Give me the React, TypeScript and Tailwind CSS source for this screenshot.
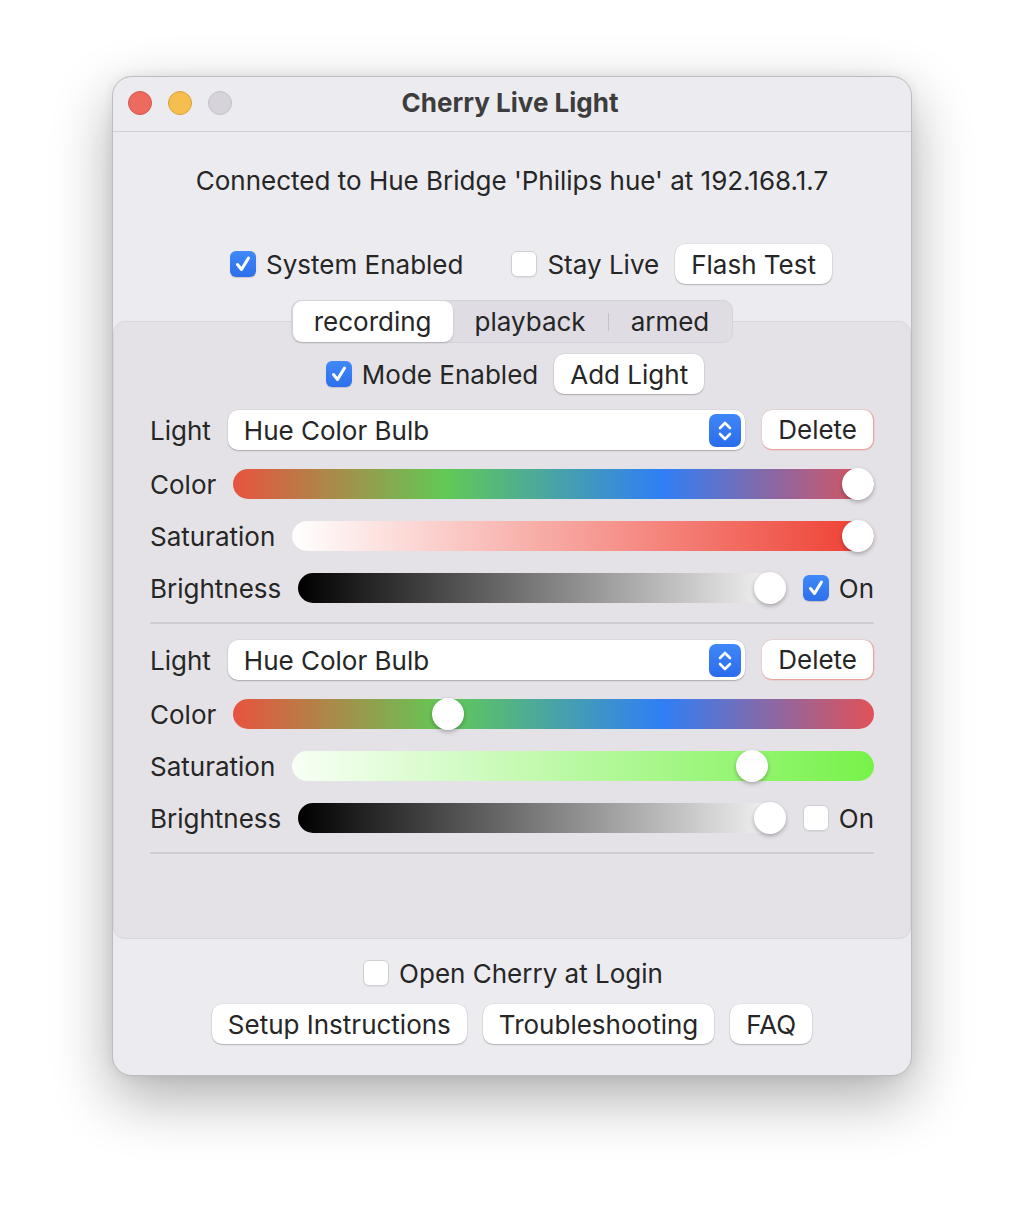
import React from "react";

const Check = ({ checked }: { checked: boolean }) =>
  checked ? (
    <div className="w-[26px] h-[26px] shrink-0 rounded-[6px] bg-[linear-gradient(to_bottom,#4089f9,#2d6fea)] flex items-center justify-center shadow-[0_1px_1px_rgba(0,0,0,0.15)]">
      <svg width="20" height="20" viewBox="0 0 20 20" fill="none">
        <path d="M4.5 10.5 L8.5 15.5 L15.5 4" stroke="white" strokeWidth="3" strokeLinecap="round" strokeLinejoin="round" />
      </svg>
    </div>
  ) : (
    <div className="w-[26px] h-[26px] shrink-0 rounded-[6px] bg-white border border-[#d0ced3] shadow-[0_1px_1px_rgba(0,0,0,0.06)]" />
  );

const Btn = ({ children, danger }: { children: React.ReactNode; danger?: boolean }) => (
  <div
    className={
      "h-[40px] px-[16px] flex items-center rounded-[10px] bg-white " +
      (danger
        ? "border-r border-b border-[#e9a59c] shadow-[0_0_0_0.5px_rgba(220,120,110,0.35)]"
        : "shadow-[0_1px_1.5px_rgba(0,0,0,0.22),0_0_0_0.5px_rgba(0,0,0,0.08)]")
    }
  >
    {children}
  </div>
);

const Slider = ({ value, bg }: { value: number; bg: string }) => (
  <div className={"relative flex-1 h-[30px] rounded-full " + bg}>
    <div
      className="absolute top-[-1px] w-[32px] h-[32px] rounded-full bg-white shadow-[0_2px_4px_rgba(0,0,0,0.28)]"
      style={{ left: `calc((100% - 32px) * ${value})` }}
    />
  </div>
);

const hueBg = "bg-[linear-gradient(to_right,#e8533f,#62c955_33%,#2f7ff5_67%,#e05258)]";
const brightBg = "bg-[linear-gradient(to_right,#000000,#f2f2f2_97%)]";

const LightBlock = ({ hue, sat, satBg, on }: { hue: number; sat: number; satBg: string; on: boolean }) => (
  <div>
    <div className="flex items-center gap-[17px] h-[40px]">
      <span>Light</span>
      <div className="flex-1 h-[40px] rounded-[10px] bg-white shadow-[0_1px_1.5px_rgba(0,0,0,0.22),0_0_0_0.5px_rgba(0,0,0,0.08)] flex items-center pl-[16px] pr-[4px]">
        <span className="flex-1">Hue Color Bulb</span>
        <div className="w-[32px] h-[33px] rounded-[7px] bg-[linear-gradient(to_bottom,#3f87f8,#2a6cec)] flex items-center justify-center">
          <svg width="32" height="33" viewBox="0 0 32 33" fill="none">
            <path d="M11 14 L16 9 L21 14" stroke="white" strokeWidth="2.6" strokeLinecap="round" strokeLinejoin="round" />
            <path d="M11 20 L16 25 L21 20" stroke="white" strokeWidth="2.6" strokeLinecap="round" strokeLinejoin="round" />
          </svg>
        </div>
      </div>
      <Btn danger>Delete</Btn>
    </div>
    <div className="flex items-center gap-[17px] h-[40px] mt-[14px]">
      <span>Color</span>
      <Slider value={hue} bg={hueBg} />
    </div>
    <div className="flex items-center gap-[17px] h-[40px] mt-[12px]">
      <span>Saturation</span>
      <Slider value={sat} bg={satBg} />
    </div>
    <div className="flex items-center h-[40px] mt-[12px]">
      <span className="mr-[17px]">Brightness</span>
      <Slider value={1} bg={brightBg} />
      <div className="ml-[17px]">
        <Check checked={on} />
      </div>
      <span className="ml-[10px]">On</span>
    </div>
    <div className="h-[2px] bg-[#cfcdd3] mt-[14px]" />
  </div>
);

export default function App() {
  return (
    <div className="min-h-[1224px] bg-white pt-[76px] font-['Inter',sans-serif] text-[26px] text-[#262626]">
      <div className="mx-auto w-[800px] h-[1000px] rounded-[20px] bg-[#ecebf0] border border-[#bdbcc1] shadow-[0_22px_60px_rgba(0,0,0,0.32),0_0_12px_rgba(0,0,0,0.08)] overflow-hidden flex flex-col">
        {/* Title bar */}
        <div className="relative h-[55px] border-b border-[#d3d1d7] flex items-center justify-center shrink-0">
          <div className="absolute left-[15px] top-[14px] flex gap-[16px]">
            <div className="w-[24px] h-[24px] rounded-full bg-[#ec6a5e] border border-[#d4574c]" />
            <div className="w-[24px] h-[24px] rounded-full bg-[#f4bf4f] border border-[#d8a33b]" />
            <div className="w-[24px] h-[24px] rounded-full bg-[#d6d4da] border border-[#c2c0c6]" />
          </div>
          <span className="font-bold text-[#3d3d3d] pr-[4px] pb-[3px]">Cherry Live Light</span>
        </div>

        <div className="text-center mt-[33px] leading-[32px]">
          Connected to Hue Bridge 'Philips hue' at 192.168.1.7
        </div>

        <div className="flex items-center justify-center mt-[47px] h-[40px] pl-[38px]">
          <Check checked />
          <span className="ml-[10px]">System Enabled</span>
          <div className="ml-[48px]">
            <Check checked={false} />
          </div>
          <span className="ml-[10px]">Stay Live</span>
          <div className="ml-[16px]">
            <Btn>Flash Test</Btn>
          </div>
        </div>

        {/* Tabs */}
        <div className="relative z-10 flex justify-center mt-[16px]">
          <div className="h-[43px] rounded-[10px] bg-[#dfdde3] border border-[#d6d4da] flex items-center p-px">
            <div className="h-[41px] px-[21px] rounded-[9px] bg-white shadow-[0_1px_2px_rgba(0,0,0,0.2)] flex items-center">recording</div>
            <div className="px-[22px] flex items-center">playback</div>
            <div className="w-px h-[18px] bg-[#c3c1c7]" />
            <div className="px-[22px] flex items-center">armed</div>
          </div>
        </div>

        {/* Group box */}
        <div className="-mt-[22px] rounded-[12px] bg-[#e4e2e7] border border-[#d8d6dc] px-[36px] pt-[32px] pb-[84px]">
          <div className="flex items-center justify-center h-[40px] pl-[6px]">
            <Check checked />
            <span className="ml-[10px]">Mode Enabled</span>
            <div className="ml-[16px]">
              <Btn>Add Light</Btn>
            </div>
          </div>
          <div className="mt-[16px]">
            <LightBlock
              hue={1}
              sat={1}
              satBg="bg-[linear-gradient(to_right,#ffffff,#ee3d30)]"
              on
            />
          </div>
          <div className="mt-[16px]">
            <LightBlock
              hue={0.326}
              sat={0.808}
              satBg="bg-[linear-gradient(to_right,#f8fff6,#77f24a)]"
              on={false}
            />
          </div>
        </div>

        <div className="flex items-center justify-center mt-[18px] h-[32px] pl-[2px]">
          <Check checked={false} />
          <span className="ml-[10px]">Open Cherry at Login</span>
        </div>
        <div className="flex justify-center gap-[16px] mt-[15px]">
          <Btn>Setup Instructions</Btn>
          <Btn>Troubleshooting</Btn>
          <Btn>FAQ</Btn>
        </div>
      </div>
    </div>
  );
}
